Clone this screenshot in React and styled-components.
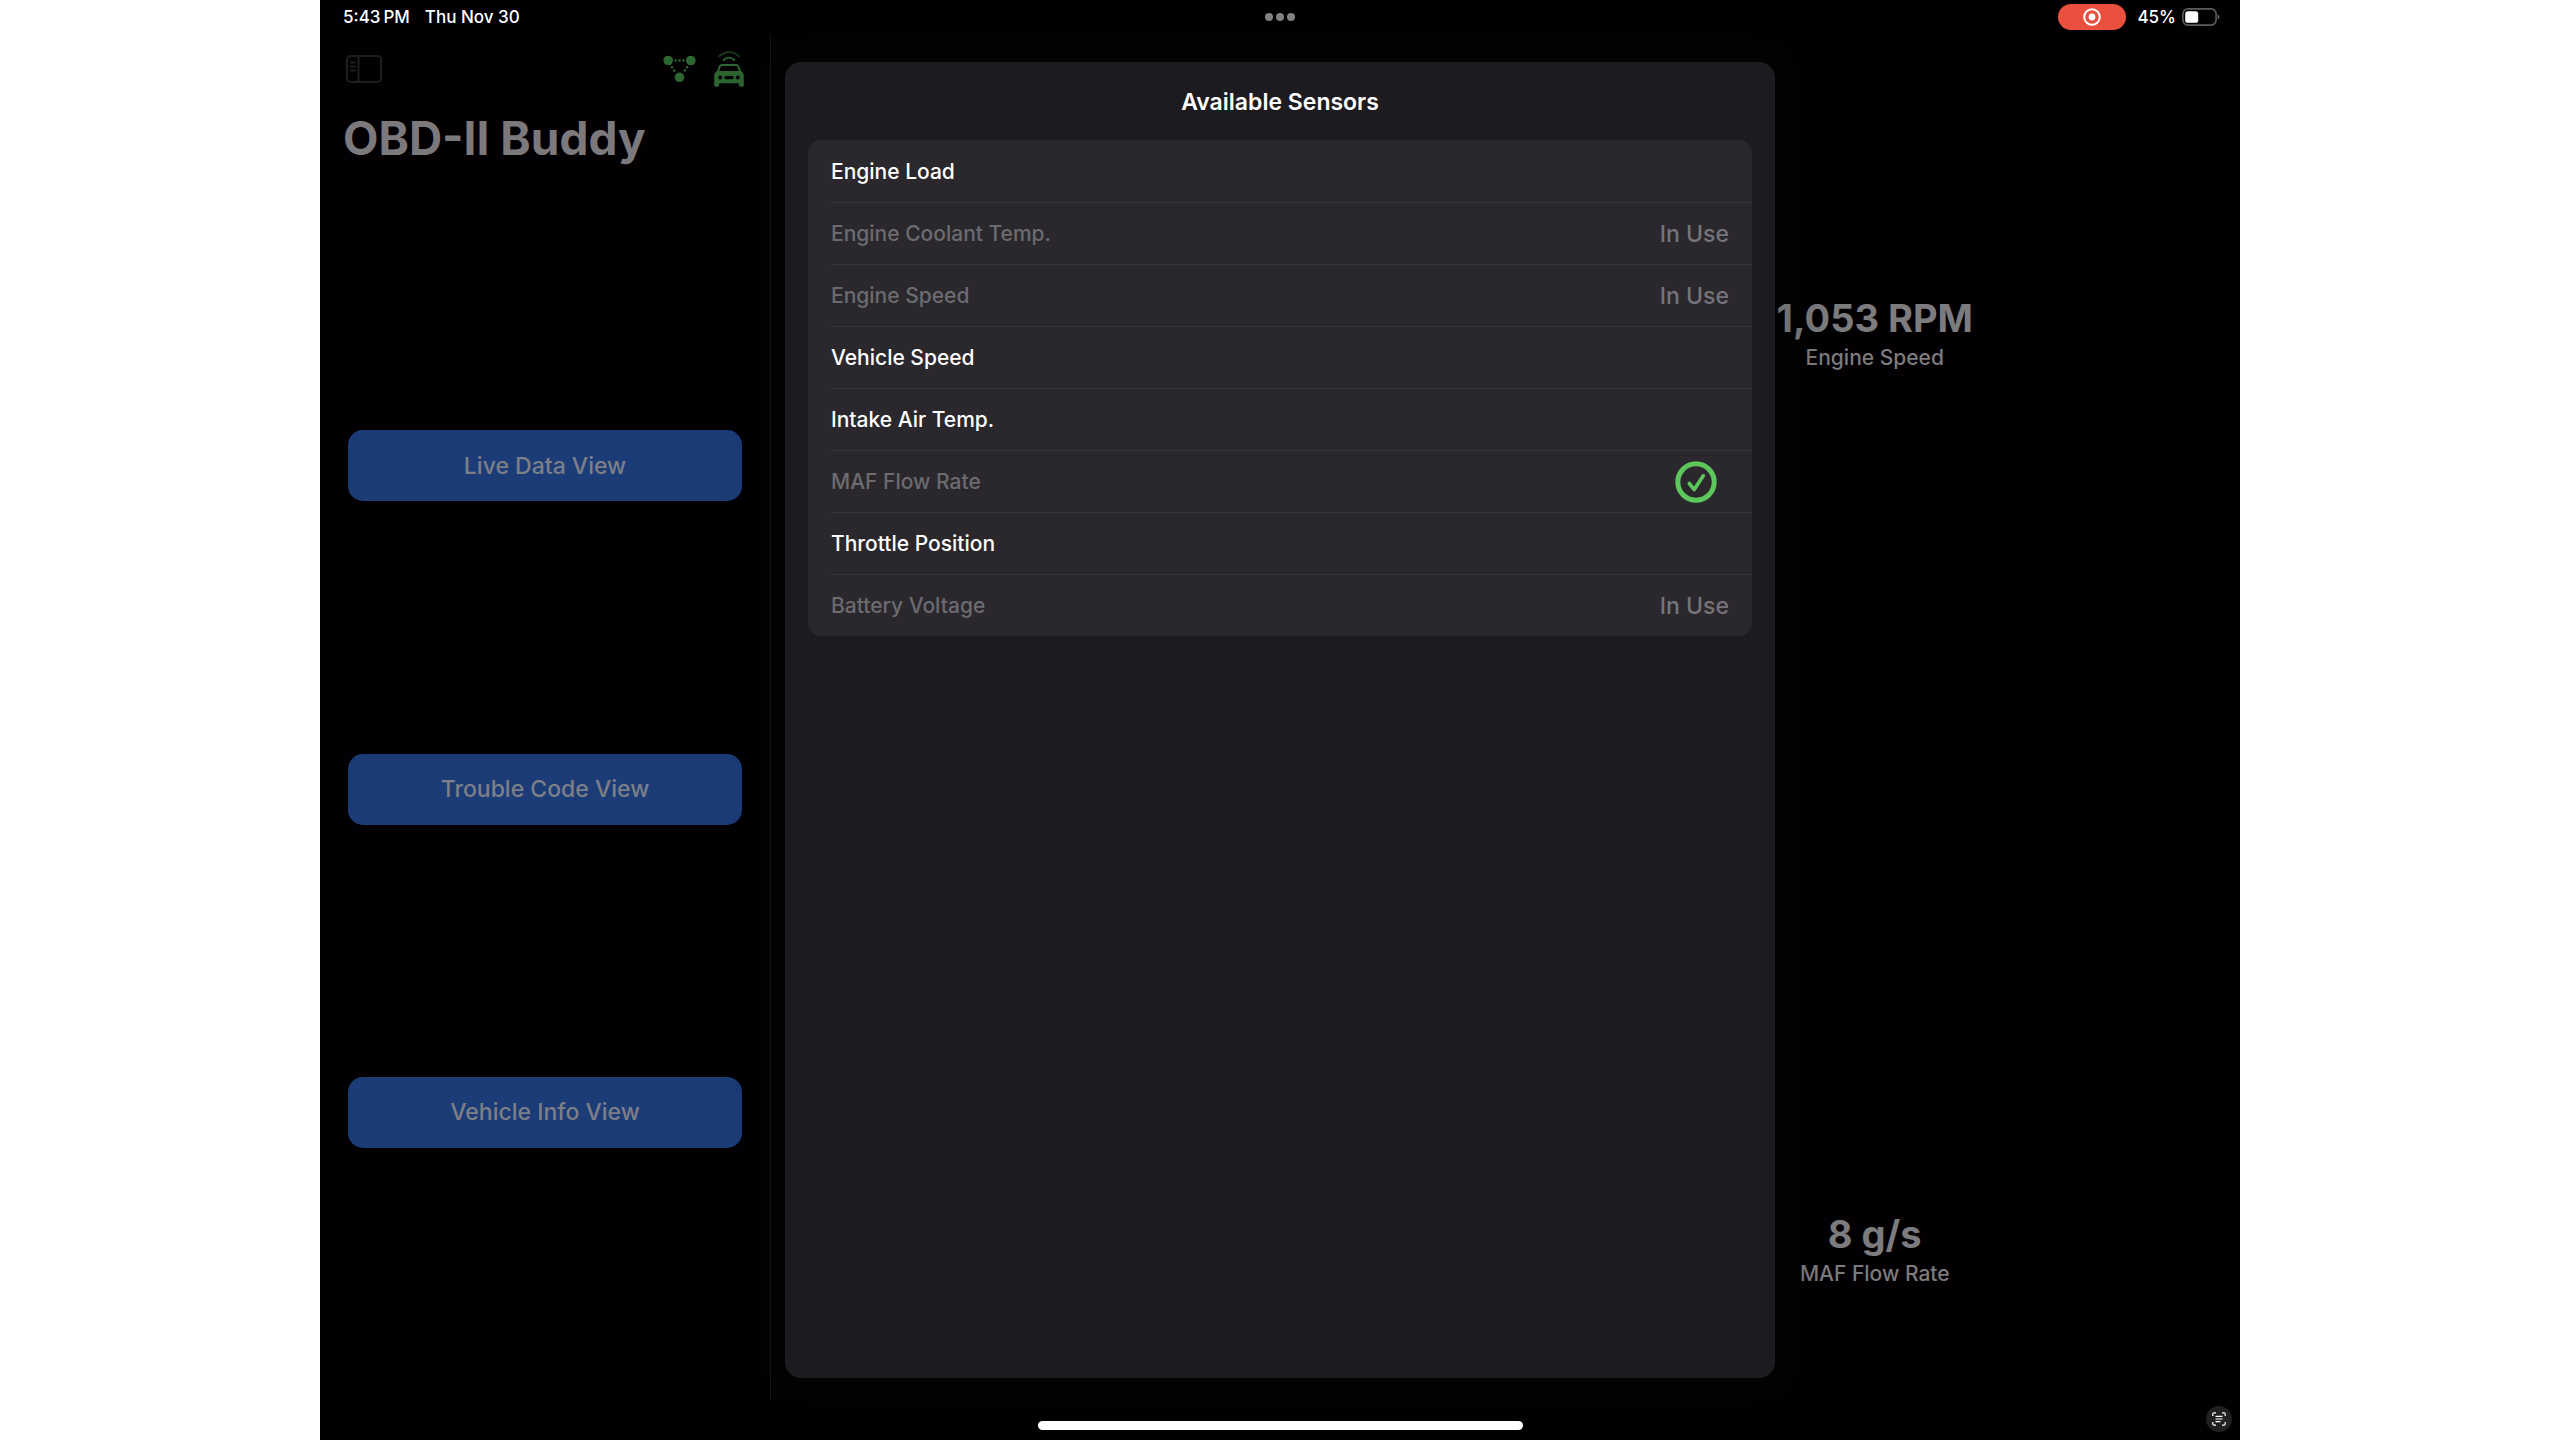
import React from "react";
import styled, { createGlobalStyle } from "styled-components";

const GlobalStyle = createGlobalStyle`
  *, *::before, *::after { box-sizing: border-box; }
  body { margin: 0; background: #fff; }
  button { font: inherit; border: 0; cursor: pointer; }
  h1, h2, p, ul { margin: 0; padding: 0; }
  svg { display: block; flex: none; }
`;

const Device = styled.div`
  position: relative;
  display: flex;
  flex-direction: column;
  width: 75%;
  min-height: 100vh;
  margin: 0 auto;
  overflow: hidden;
  background: #020003;
  color: #fff;
  font-family: Inter, "Liberation Sans", sans-serif;
`;

const StatusBar = styled.header`
  position: relative;
  display: flex;
  align-items: center;
  justify-content: space-between;
  height: 34px;
  padding: 0 20px 0 23px;
  font-size: 17px;
  line-height: 20px;
  font-weight: 500;
`;

const StatusGroup = styled.div`
  display: flex;
  align-items: center;
  gap: ${(p) => p.$gap}px;
`;

const Multitask = styled.button`
  position: absolute;
  inset: 0;
  display: flex;
  align-items: center;
  justify-content: center;
  gap: 3px;
  width: 60px;
  margin: 0 auto;
  padding: 0;
  background: none;
`;

const Dot = styled.span`
  width: 8px;
  height: 8px;
  border-radius: 50%;
  background: #858585;
`;

const RecordPill = styled.button`
  display: flex;
  align-items: center;
  justify-content: center;
  width: 68px;
  height: 26px;
  margin-right: 5px;
  padding: 0;
  border-radius: 13px;
  background: #e9503e;
`;

const Body = styled.div`
  display: flex;
  flex: 1;
  padding-bottom: 40px;
`;

const Sidebar = styled.aside`
  display: flex;
  flex-direction: column;
  width: 451px;
  border-right: 1px solid #161617;
`;

const Toolbar = styled.div`
  display: flex;
  align-items: center;
  justify-content: space-between;
  height: 70px;
  padding: 0 26px 0 25px;
`;

const IconButton = styled.button`
  display: flex;
  padding: 0;
  background: none;
`;

const AppTitle = styled.h1`
  height: 74px;
  padding-left: 23px;
  font-size: 46px;
  line-height: 68px;
  font-weight: 700;
  color: #7c797d;
`;

const Nav = styled.nav`
  display: flex;
  flex: 1;
  flex-direction: column;
  justify-content: space-evenly;
  padding: 0 28px;
`;

const NavButton = styled.button`
  height: 71px;
  border-radius: 15px;
  background: #1c3c78;
  color: #7d7f86;
  && {
    font-size: 23px;
    line-height: 30px;
    font-weight: 500;
  }
`;

const Dashboard = styled.main`
  display: grid;
  flex: 1;
  grid-template-columns: 1fr 1fr;
  column-gap: 8px;
  align-content: space-between;
  padding: 259px 0 111px;
`;

const Gauge = styled.section`
  grid-column: 2;
  text-align: center;
`;

const GaugeValue = styled.p`
  font-size: 38px;
  line-height: 50px;
  font-weight: 700;
  color: #7c7b7e;
`;

const GaugeLabel = styled.p`
  font-size: 21px;
  line-height: 30px;
  font-weight: 500;
  color: #7c7b7e;
`;

const Overlay = styled.div`
  position: absolute;
  inset: 62px 0;
  display: flex;
  justify-content: center;
`;

const Sheet = styled.section`
  width: 990px;
  padding: 0 23px;
  border-radius: 16px;
  background: #1d1b1f;
  box-shadow: 0 0 40px 32px rgba(10, 30, 0, 0.1);
`;

const SheetTitle = styled.h2`
  height: 78px;
  font-size: 23px;
  line-height: 80px;
  font-weight: 600;
  text-align: center;
`;

const SensorList = styled.ul`
  overflow: hidden;
  border-radius: 14px;
  background: #2a282c;
  list-style: none;
`;

const SensorItem = styled.li`
  height: 62px;
  margin-left: 23px;
  border-top: 1px solid #363538;
  &:first-child { border-top-color: transparent; }
`;

const SensorButton = styled.button`
  display: flex;
  align-items: center;
  justify-content: space-between;
  width: 100%;
  height: 100%;
  padding: 0 23px 0 0;
  background: none;
  color: #fff;
  text-align: left;
  && {
    font-size: 21px;
    line-height: 30px;
    font-weight: 500;
  }
  &:disabled {
    color: #6c6b70;
  }
`;

const InUse = styled.span`
  font-size: 23px;
  color: #757479;
`;

const CheckSlot = styled.span`
  padding-right: 12px;
`;

const HomeIndicator = styled.div`
  position: absolute;
  bottom: 10px;
  left: 50%;
  width: 485px;
  height: 9px;
  margin-left: -242px;
  border-radius: 5px;
  background: #fff;
`;

const ScanButton = styled.button`
  position: absolute;
  right: 8px;
  bottom: 8px;
  display: flex;
  align-items: center;
  justify-content: center;
  width: 26px;
  height: 26px;
  padding: 0;
  border-radius: 50%;
  background: #202020;
`;

const RecordIcon = () => (
  <svg width="18" height="18" viewBox="0 0 18 18" aria-hidden="true">
    <circle cx="9" cy="9" r="7.8" fill="none" stroke="#fff" strokeWidth="2" />
    <circle cx="9" cy="9" r="3.4" fill="#fff" />
  </svg>
);

const BatteryIcon = () => (
  <svg width="38" height="18" viewBox="0 0 38 18" aria-hidden="true">
    <rect x="0.9" y="0.9" width="33.2" height="16.2" rx="5" fill="none" stroke="#5d5c5f" strokeWidth="1.6" />
    <rect x="3.2" y="3.2" width="13" height="11.6" rx="2.6" fill="#fff" />
    <path d="M35.6 6.2c1.2.5 1.9 1.5 1.9 2.8s-.7 2.3-1.9 2.8z" fill="#5d5c5f" />
  </svg>
);

const SidebarIcon = () => (
  <svg width="37" height="28" viewBox="0 0 37 28" fill="none" stroke="#1e1d1f" strokeWidth="2" strokeLinecap="round" aria-hidden="true">
    <rect x="2" y="1" width="34" height="26" rx="4" />
    <path d="M13.5 1v26M6 7.5h4M6 11.5h4M6 15.5h4" />
  </svg>
);

const NodesIcon = () => (
  <svg width="33" height="28" viewBox="0 0 33 28" fill="#2d6630" aria-hidden="true">
    <circle cx="5.2" cy="5.5" r="4.8" />
    <circle cx="27.8" cy="5.5" r="4.8" />
    <circle cx="16.5" cy="22.3" r="4.8" />
    {[[12.5, 5.5], [16.5, 5.5], [20.5, 5.5], [9, 12.2], [11.2, 15.5], [24, 12.2], [21.8, 15.5]].map(
      ([x, y]) => (
        <circle key={`${x}-${y}`} cx={x} cy={y} r="1.2" />
      )
    )}
  </svg>
);

const CarIcon = () => (
  <svg width="30" height="36" viewBox="0 0 30 36" fill="none" stroke="#2d6630" strokeLinecap="round" aria-hidden="true">
    <path d="M5.2 5.4C10.5-.4 19.500-.4 24.800 5.4" strokeWidth="1.8" opacity="0.6" />
    <path d="M9.6 9C12.7 5.9 17.3 5.9 20.4 9" strokeWidth="1.8" />
    <path
      fill="#2d6630"
      fillRule="evenodd"
      stroke="none"
      d="M7.8 13h14.400c1.600 0 2.700.9 3.200 2.500l1.700 4.700c1.800 1 2.700 2.500 2.700 4.800v9c0 1-.7 1.700-1.700 1.700h-1.600c-1 0-1.700-.7-1.700-1.700v-1.700H5.200V34c0 1-.7 1.700-1.700 1.700H1.900C.9 35.700.2 35 .2 34v-9c0-2.300.9-3.800 2.700-4.800l1.700-4.700C5.100 13.900 6.200 13 7.800 13zm.3 2c-.8 0-1.300.4-1.600 1.200l-1.300 3.700h19.600l-1.300-3.700c-.3-.8-.8-1.200-1.600-1.200zM6.200 24.600a2 2 0 1 0 0 4 2 2 0 0 0 0-4zm17.600 0a2 2 0 1 0 0 4 2 2 0 0 0 0-4zm-11.900.4a1.600 1.600 0 0 0 0 3.200h6.200a1.600 1.600 0 0 0 0-3.200z"
    />
  </svg>
);

const CheckIcon = () => (
  <svg width="42" height="42" viewBox="0 0 42 42" fill="none" stroke="#5ec75c" strokeLinecap="round" strokeLinejoin="round" role="img" aria-label="Selected">
    <circle cx="21" cy="21" r="18.2" strokeWidth="5" />
    <path d="M14.3 22.5L19.2 28.6 28.3 14.8" strokeWidth="3.6" />
  </svg>
);

const ScanIcon = () => (
  <svg width="14" height="14" viewBox="0 0 14 14" fill="none" stroke="#fff" strokeWidth="1.2" aria-hidden="true">
    <path d="M.8 4V2Q.8.8 2 .8H4M10 .8h2q1.2 0 1.2 1.2v2M13.2 10v2q0 1.2-1.2 1.2h-2M4 13.200H2Q.8 13.200.8 12v-2M3.500 4.300h7M3.500 7h7M3.500 9.700h5" />
  </svg>
);

const views = ["Live Data View", "Trouble Code View", "Vehicle Info View"];

const gauges = [
  { value: "1,053 RPM", label: "Engine Speed" },
  { value: "8 g/s", label: "MAF Flow Rate" },
];

const sensors = [
  { name: "Engine Load" },
  { name: "Engine Coolant Temp.", state: "used" },
  { name: "Engine Speed", state: "used" },
  { name: "Vehicle Speed" },
  { name: "Intake Air Temp." },
  { name: "MAF Flow Rate", state: "selected" },
  { name: "Throttle Position" },
  { name: "Battery Voltage", state: "used" },
];

export default function App() {
  return (
    <>
      <GlobalStyle />
      <Device>
        <StatusBar>
          <StatusGroup $gap={15}>
            <span>{"5:43\u2009PM"}</span>
            <span>Thu Nov 30</span>
          </StatusGroup>
          <Multitask aria-label="Multitasking">
            <Dot />
            <Dot />
            <Dot />
          </Multitask>
          <StatusGroup $gap={6}>
            <RecordPill aria-label="Screen recording">
              <RecordIcon />
            </RecordPill>
            <span>45%</span>
            <BatteryIcon />
          </StatusGroup>
        </StatusBar>

        <Body>
          <Sidebar>
            <Toolbar>
              <IconButton aria-label="Toggle sidebar">
                <SidebarIcon />
              </IconButton>
              <StatusGroup $gap={18}>
                <NodesIcon />
                <CarIcon />
              </StatusGroup>
            </Toolbar>
            <AppTitle>OBD-II Buddy</AppTitle>
            <Nav>
              {views.map((view) => (
                <NavButton key={view}>{view}</NavButton>
              ))}
            </Nav>
          </Sidebar>

          <Dashboard>
            {gauges.map((gauge) => (
              <Gauge key={gauge.label}>
                <GaugeValue>{gauge.value}</GaugeValue>
                <GaugeLabel>{gauge.label}</GaugeLabel>
              </Gauge>
            ))}
          </Dashboard>
        </Body>

        <Overlay>
          <Sheet role="dialog" aria-labelledby="sheet-title">
            <SheetTitle id="sheet-title">Available Sensors</SheetTitle>
            <SensorList>
              {sensors.map(({ name, state }) => (
                <SensorItem key={name}>
                  <SensorButton disabled={Boolean(state)}>
                    <span>{name}</span>
                    {state === "used" && <InUse>In Use</InUse>}
                    {state === "selected" && (
                      <CheckSlot>
                        <CheckIcon />
                      </CheckSlot>
                    )}
                  </SensorButton>
                </SensorItem>
              ))}
            </SensorList>
          </Sheet>
        </Overlay>

        <HomeIndicator />
        <ScanButton aria-label="Scan text">
          <ScanIcon />
        </ScanButton>
      </Device>
    </>
  );
}
